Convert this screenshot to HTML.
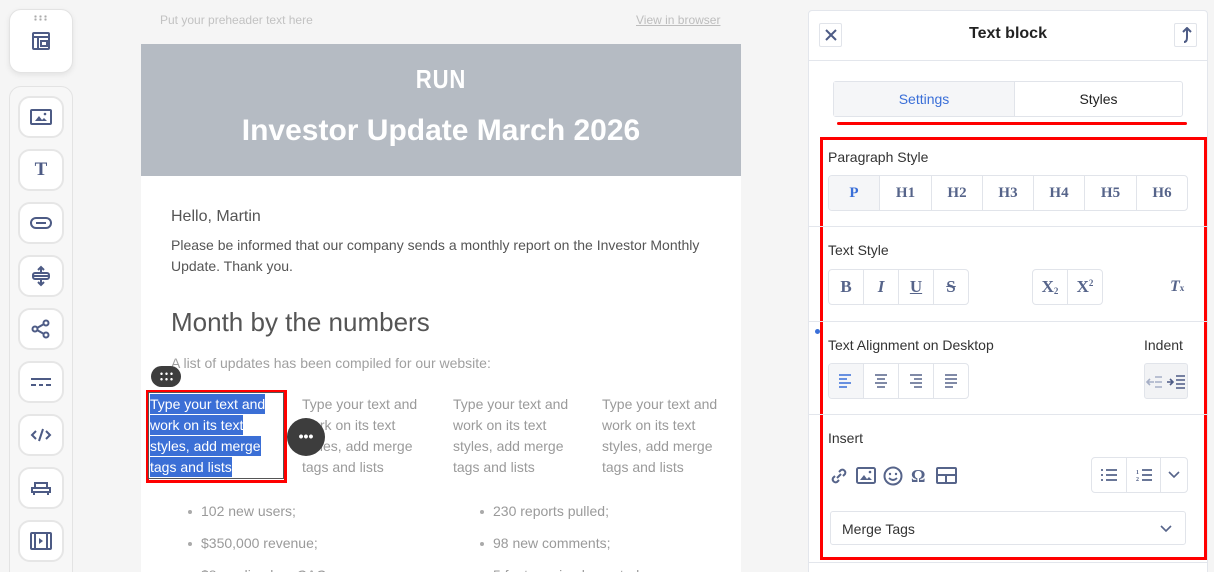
<!DOCTYPE html>
<html><head><meta charset="utf-8">
<style>
*{margin:0;padding:0;box-sizing:border-box}
html,body{width:1214px;height:572px;overflow:hidden}
body{background:#f5f5f5;font-family:"Liberation Sans",sans-serif;position:relative}
.a{position:absolute}
.sb{background:#fff;border:1px solid #e3e3e3;border-radius:12px}
.tb{position:absolute;left:18px;width:46px;height:42px;background:#fff;border:2px solid #e6e6e6;border-radius:12px;display:flex;align-items:center;justify-content:center}
.ic{stroke:#4d5b85;fill:none;stroke-width:2}
.lbl{position:absolute;font-size:14px;color:#333}
.grp{position:absolute;display:flex;border:1px solid #e1e4ea;border-radius:4px;overflow:hidden;background:#fff}
.grp div{border-right:1px solid #e1e4ea;display:flex;align-items:center;justify-content:center;font-family:"Liberation Serif",serif;font-weight:bold;font-size:15px;color:#56648a}
.grp div:last-child{border-right:none}
.hr{position:absolute;left:809px;width:398px;height:1px;background:#e3e6ec}
.col{position:absolute;top:394px;width:130px;font-size:14px;line-height:21px;color:#9a9a9a}
.li{position:absolute;font-size:14px;color:#9a9a9a}
.li:before{content:"";position:absolute;left:-13px;top:7px;width:4px;height:4px;border-radius:50%;background:#aaa}
</style></head><body>

<div class="a sb" style="left:9px;top:9px;width:64px;height:64px;box-shadow:0 2px 6px rgba(0,0,0,.08)"></div>
<div class="a" style="left:33px;top:15px;width:16px;height:6px;background:radial-gradient(circle,#aaa 1px,transparent 1.3px) 0 0/5px 3px"></div>
<svg class="a" style="left:31px;top:31px" width="20" height="20" viewBox="0 0 20 20"><rect class="ic" x="2" y="2" width="16" height="16" rx="1"/><path class="ic" d="M2 6h16M7 6v12M10 10h6v5h-6z"/></svg>
<div class="a sb" style="left:9px;top:86px;width:64px;height:500px;background:#f7f7f7"></div>
<div class="tb" style="top:96px"><svg width="22" height="16"><rect class="ic" x="1" y="1" width="20" height="14" rx="1"/><path d="M5 12l4-5 3 4 2-2 3 3z" fill="#4d5b85"/><circle cx="15" cy="5" r="1.3" fill="#4d5b85"/></svg></div>
<div class="tb" style="top:149px"><span style="font-family:'Liberation Serif',serif;font-weight:bold;font-size:19px;color:#4d5b85">T</span></div>
<div class="tb" style="top:202px"><svg width="22" height="12"><rect class="ic" x="1" y="1" width="20" height="10" rx="5"/><path class="ic" d="M6 6h10"/></svg></div>
<div class="tb" style="top:255px"><svg width="20" height="22"><path class="ic" d="M1 11h18M10 2v6M7 5l3-3 3 3M10 20v-6M7 17l3 3 3-3"/><rect class="ic" x="2" y="8" width="16" height="6" rx="2"/></svg></div>
<div class="tb" style="top:308px"><svg width="20" height="20"><circle class="ic" cx="15" cy="4" r="2.5"/><circle class="ic" cx="4" cy="10" r="2.5"/><circle class="ic" cx="15" cy="16" r="2.5"/><path class="ic" d="M6 9l7-4M6 11l7 4"/></svg></div>
<div class="tb" style="top:361px"><svg width="22" height="10"><path class="ic" d="M1 2h20M1 8h5M9 8h4M16 8h5"/></svg></div>
<div class="tb" style="top:414px"><svg width="22" height="14"><path class="ic" d="M6 3L2 7l4 4M16 3l4 4-4 4M13 1l-4 12"/></svg></div>
<div class="tb" style="top:467px"><svg width="22" height="18"><path class="ic" d="M5 9V4h12v5M2 9h18v4H2zM4 13v3M18 13v3"/></svg></div>
<div class="tb" style="top:520px"><svg width="22" height="18"><rect class="ic" x="1" y="1" width="20" height="16" rx="1"/><path class="ic" d="M5 1v16M17 1v16"/><path d="M9 6v6l4-3z" fill="#4d5b85"/></svg></div>

<div class="a" style="left:160px;top:13px;font-size:12px;color:#c2c2c2">Put your preheader text here</div>
<div class="a" style="left:636px;top:13px;font-size:12px;color:#bdbdbd;text-decoration:underline">View in browser</div>
<div class="a" style="left:141px;top:44px;width:600px;height:530px;background:#fff"></div>
<div class="a" style="left:141px;top:44px;width:600px;height:132px;background:#b5bbc3"></div>
<div class="a" style="left:141px;top:64px;width:600px;text-align:center;color:#fff;font-weight:bold;font-size:26px;letter-spacing:1px;transform:scaleX(.85)">RUN</div>
<div class="a" style="left:141px;top:114px;width:600px;text-align:center;color:#fff;font-weight:bold;font-size:30px">Investor Update March 2026</div>
<div class="a" style="left:171px;top:208px;font-size:16px;color:#555">Hello, Martin</div>
<div class="a" style="left:171px;top:235px;width:540px;font-size:14px;line-height:21px;color:#555">Please be informed that our company sends a monthly report on the Investor Monthly Update. Thank you.</div>
<div class="a" style="left:171px;top:307px;font-size:26px;color:#555">Month by the numbers</div>
<div class="a" style="left:171px;top:355px;font-size:14px;color:#a0a0a0">A list of updates has been compiled for our website:</div>
<div class="col" style="left:302px">Type your text and work on its text styles, add merge tags and lists</div>
<div class="col" style="left:453px">Type your text and work on its text styles, add merge tags and lists</div>
<div class="col" style="left:602px">Type your text and work on its text styles, add merge tags and lists</div>
<div class="a" style="left:146px;top:390px;width:141px;height:93px;border:3px solid #f00;background:#fff"></div>
<div class="a" style="left:148px;top:392px;width:136px;height:87px;border:1px solid #555"></div>
<div class="a" style="left:150px;top:394px;width:130px;font-size:14px;line-height:21px;color:#fff">
<span style="background:#3b6fd6;padding:2px 0">Type your text and<br>work on its text<br>styles, add merge<br>tags and lists</span></div>
<div class="a" style="left:151px;top:366px;width:30px;height:21px;border-radius:11px;background:#3d3d3d"></div>
<div class="a" style="left:159px;top:371px;width:15px;height:11px;background:radial-gradient(circle,#fff 1.1px,transparent 1.4px) 0 0/5px 5.5px"></div>
<div class="a" style="left:287px;top:418px;width:38px;height:38px;border-radius:50%;background:#3d3d3d;color:#fff;text-align:center;font-size:14px;line-height:37px;font-weight:bold;letter-spacing:0">•••</div>
<div class="li" style="left:201px;top:503px">102 new users;</div>
<div class="li" style="left:201px;top:535px">$350,000 revenue;</div>
<div class="li" style="left:201px;top:567px">$8 median buy CAC</div>
<div class="li" style="left:493px;top:503px">230 reports pulled;</div>
<div class="li" style="left:493px;top:535px">98 new comments;</div>
<div class="li" style="left:493px;top:567px">5 features implemented</div>

<div class="a" style="left:808px;top:10px;width:400px;height:570px;background:#fff;border:1px solid #e3e6ec;border-radius:4px"></div>
<div class="a" style="left:819px;top:23px;width:23px;height:24px;border:1px solid #e1e4ea;border-radius:2px;display:flex;align-items:center;justify-content:center"><svg width="12" height="12"><path d="M1 1l10 10M11 1L1 11" stroke="#4d5b85" stroke-width="2"/></svg></div>
<div class="a" style="left:1174px;top:23px;width:23px;height:24px;border:1px solid #e1e4ea;border-radius:2px;display:flex;align-items:center;justify-content:center"><svg width="12" height="16"><path d="M4 15c3 0 3-3 3-6V2M3 5l4-4 4 4" fill="none" stroke="#4d5b85" stroke-width="2"/></svg></div>
<div class="a" style="left:808px;top:25px;width:400px;text-align:center;font-size:16px;font-weight:bold;color:#222">Text block</div>
<div class="hr" style="top:60px"></div>
<div class="a" style="left:833px;top:81px;width:350px;height:36px;border:1px solid #e1e4ea;border-radius:3px;display:flex;font-size:14px">
<div style="width:181px;background:#f5f6f8;color:#3a6fd8;display:flex;align-items:center;justify-content:center;border-right:1px solid #e1e4ea">Settings</div>
<div style="flex:1;color:#222;display:flex;align-items:center;justify-content:center">Styles</div></div>
<div class="a" style="left:837px;top:122px;width:350px;height:3px;background:#f00;border-radius:2px"></div>
<div class="a" style="left:820px;top:137px;width:387px;height:423px;border:3px solid #f00"></div>

<div class="lbl" style="left:828px;top:149px">Paragraph Style</div>
<div class="grp" style="left:828px;top:175px;width:360px;height:36px">
<div style="width:51px;background:#f5f6f8;color:#3a6fd8">P</div><div style="width:52px">H1</div><div style="width:51px">H2</div><div style="width:51px">H3</div><div style="width:51px">H4</div><div style="width:52px">H5</div><div style="flex:1">H6</div></div>
<div class="hr" style="top:226px"></div>

<div class="lbl" style="left:828px;top:242px">Text Style</div>
<div class="grp" style="left:828px;top:269px;width:141px;height:36px">
<div style="width:35px;font-size:17px">B</div><div style="width:35px;font-size:17px;font-style:italic">I</div><div style="width:35px;font-size:17px;text-decoration:underline">U</div><div style="flex:1;font-size:17px;text-decoration:line-through">S</div></div>
<div class="grp" style="left:1032px;top:269px;width:71px;height:36px">
<div style="width:35px;font-size:17px">X<span style="font-size:9px;margin-top:8px">2</span></div><div style="flex:1;font-size:17px">X<span style="font-size:9px;margin-top:-8px">2</span></div></div>
<div class="a" style="left:1170px;top:278px;font-family:'Liberation Serif',serif;font-style:italic;font-weight:bold;font-size:16px;color:#56648a">T<span style="font-size:9px;font-style:normal">x</span></div>
<div class="hr" style="top:321px"></div>
<div class="a" style="left:815px;top:329px;width:5px;height:5px;border-radius:50%;background:#3a6fd8"></div>

<div class="lbl" style="left:828px;top:337px">Text Alignment on Desktop</div>
<div class="lbl" style="left:1144px;top:337px">Indent</div>
<div class="grp" style="left:828px;top:363px;width:141px;height:36px">
<div style="width:35px;background:#f5f6f8"><svg width="14" height="14"><path d="M0 1h12M0 5h8M0 9h12M0 13h8" stroke="#3a6fd8" stroke-width="1.6"/></svg></div>
<div style="width:35px"><svg width="14" height="14"><path d="M1 1h12M3 5h8M1 9h12M3 13h8" stroke="#56648a" stroke-width="1.6"/></svg></div>
<div style="width:35px"><svg width="14" height="14"><path d="M1 1h12M5 5h8M1 9h12M5 13h8" stroke="#56648a" stroke-width="1.6"/></svg></div>
<div style="flex:1"><svg width="14" height="14"><path d="M1 1h12M1 5h12M1 9h12M1 13h8" stroke="#56648a" stroke-width="1.6"/></svg></div></div>
<div class="a" style="left:1144px;top:363px;width:44px;height:36px;background:#f2f3f5;border:1px solid #e1e4ea;border-radius:3px"><svg width="44" height="36"><path d="M3 18h6M5 15l-3 3 3 3M10 13h7M10 18h7M10 23h7" stroke="#a6afc6" stroke-width="1.6" fill="none"/><path d="M22 18h6M25 15l3 3-3 3M31 12h9M31 16h9M31 20h9M31 24h9" stroke="#4d5b85" stroke-width="1.6" fill="none"/></svg></div>
<div class="hr" style="top:414px"></div>

<div class="lbl" style="left:828px;top:430px">Insert</div>
<svg class="a" style="left:829px;top:466px" width="130" height="20"><g stroke="#56648a" stroke-width="2" fill="none"><path d="M8 12l4-4M6 10l-2 2a3 3 0 004 4l2-2M14 10l2-2a3 3 0 00-4-4l-2 2"/><rect x="28" y="2" width="18" height="15" rx="1.5"/><circle cx="64" cy="10" r="8.5"/><rect x="108" y="2" width="19" height="15" rx="1"/><path d="M108 9h19M117 9v8"/></g><path d="M31 14l4-5 3 4 2-2 3 3z" fill="#56648a"/><circle cx="41" cy="6" r="1.3" fill="#56648a"/><circle cx="61" cy="8" r="1.2" fill="#56648a"/><circle cx="67" cy="8" r="1.2" fill="#56648a"/><path d="M60 12q4 4 8 0" stroke="#56648a" stroke-width="1.8" fill="none"/><text x="82" y="16" font-family="Liberation Serif" font-weight="bold" font-size="18" fill="#56648a">Ω</text></svg>
<div class="grp" style="left:1091px;top:457px;width:97px;height:36px">
<div style="width:35px"><svg width="16" height="14"><path d="M0 2h2M0 7h2M0 12h2M5 2h11M5 7h11M5 12h11" stroke="#56648a" stroke-width="1.8"/></svg></div>
<div style="width:34px"><svg width="16" height="14"><path d="M6 2h10M6 7h10M6 12h10" stroke="#56648a" stroke-width="1.8"/><text x="0" y="6" font-size="6" fill="#56648a">1</text><text x="0" y="13" font-size="6" fill="#56648a">2</text></svg></div>
<div style="flex:1"><svg width="12" height="8"><path d="M1 1l5 5 5-5" stroke="#56648a" stroke-width="1.6" fill="none"/></svg></div></div>
<div class="a" style="left:830px;top:511px;width:356px;height:34px;border:1px solid #e1e4ea;border-radius:3px;font-size:14px;color:#333;padding:9px 0 0 11px">Merge Tags<svg style="position:absolute;right:13px;top:13px" width="12" height="8"><path d="M1 1l5 5 5-5" stroke="#56648a" stroke-width="1.6" fill="none"/></svg></div>
<div class="hr" style="top:562px"></div>
</body></html>
